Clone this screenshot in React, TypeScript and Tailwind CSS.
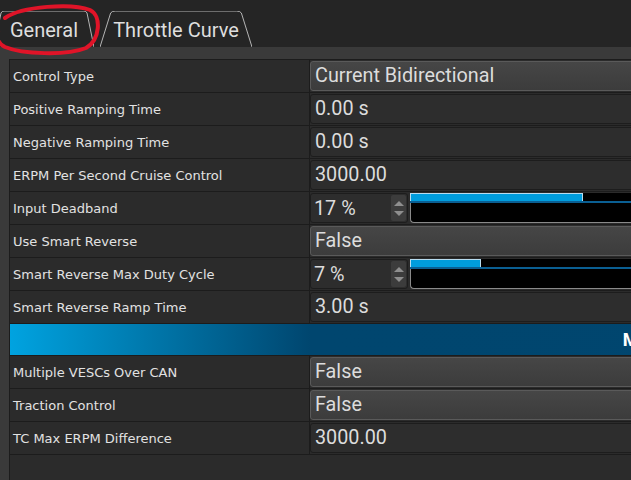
import React from 'react'

type Row =
  | { label: string; kind: 'combo' | 'text'; value: string }
  | { label: string; kind: 'spin'; value: string; pct: number }
  | { label: string; kind: 'banner'; value: string }

const rows: Row[] = [
  { label: 'Control Type', kind: 'combo', value: 'Current Bidirectional' },
  { label: 'Positive Ramping Time', kind: 'text', value: '0.00 s' },
  { label: 'Negative Ramping Time', kind: 'text', value: '0.00 s' },
  { label: 'ERPM Per Second Cruise Control', kind: 'text', value: '3000.00' },
  { label: 'Input Deadband', kind: 'spin', value: '17 %', pct: 17 },
  { label: 'Use Smart Reverse', kind: 'combo', value: 'False' },
  { label: 'Smart Reverse Max Duty Cycle', kind: 'spin', value: '7 %', pct: 7 },
  { label: 'Smart Reverse Ramp Time', kind: 'text', value: '3.00 s' },
  { label: '', kind: 'banner', value: 'Multiple ESCs over CAN' },
  { label: 'Multiple VESCs Over CAN', kind: 'combo', value: 'False' },
  { label: 'Traction Control', kind: 'combo', value: 'False' },
  { label: 'TC Max ERPM Difference', kind: 'text', value: '3000.00' },
]

const valueFont = "font-['Roboto',sans-serif] text-[19.8px] text-[#dcdcdc]"

function TabShape() {
  return (
    <svg className="absolute inset-0 h-full w-full" viewBox="0 0 100 36" preserveAspectRatio="none">
      <path d="M0 36 L7 2 Q8 0 10 0 L90 0 Q92 0 93 2 L100 36" fill="none" stroke="#b5b5b5" strokeWidth="1" vectorEffect="non-scaling-stroke" />
    </svg>
  )
}

function Tab({ label, width }: { label: string; width: string }) {
  return (
    <div className={`relative h-[36px] ${width} flex items-center justify-center pt-[2px]`}>
      <TabShape />
      <span className="relative font-['Roboto',sans-serif] text-[20px] text-[#dedede]">{label}</span>
    </div>
  )
}

function Spin({ value, pct }: { value: string; pct: number }) {
  return (
    <div className="flex h-full">
      <div className="flex w-[98px] rounded-[3px] border border-[#1d1d1d] bg-[#2d2d2d]">
        <div className={`flex-1 pl-[3px] leading-[30px] ${valueFont}`}>{value}</div>
        <div className="my-[1px] mr-[1px] flex w-[15px] flex-col items-center justify-center gap-[5px] rounded-[2px] bg-[#3c3c3c]">
          <div className="h-0 w-0 border-x-[5px] border-b-[5px] border-x-transparent border-b-[#8e8e8e]" />
          <div className="h-0 w-0 border-x-[5px] border-t-[5px] border-x-transparent border-t-[#8e8e8e]" />
        </div>
      </div>
      <div className="ml-[2px] flex flex-1 flex-col">
        <div className="h-[10px] border-b-2 border-[#0a5f93] bg-black">
          <div className="h-[8px] border-t border-l border-r border-[#b8dcef] bg-[#009ddd]" style={{ width: `${pct}%` }} />
        </div>
        <div className="flex-1 rounded-bl-[4px] border-l border-b border-[#8a8a8a] bg-black" />
      </div>
    </div>
  )
}

function Value({ row }: { row: Row }) {
  if (row.kind === 'combo') {
    return (
      <div className={`h-full rounded-[3px] border border-[#5a5a5a] bg-gradient-to-b from-[#464646] to-[#3c3c3c] pl-[4px] leading-[28px] ${valueFont}`}>
        {row.value}
      </div>
    )
  }
  if (row.kind === 'spin') return <Spin value={row.value} pct={row.pct} />
  return (
    <div className={`h-full rounded-[3px] border border-[#1d1d1d] bg-[#2d2d2d] pl-[4px] leading-[28px] ${valueFont}`}>
      {row.value}
    </div>
  )
}

export default function App() {
  return (
    <div className="relative h-[480px] w-[631px] overflow-hidden bg-[#3a3a3a]">
      <div className="flex h-[47px] items-end bg-[#252525]">
        <div className="-ml-[6px] flex gap-[6px]">
          <Tab label="General" width="w-[100px]" />
          <Tab label="Throttle Curve" width="w-[152px]" />
        </div>
      </div>

      <div className="ml-[9px] mt-[12px] w-[1420px] border-t border-l border-[#1c1c1c] bg-[#2b2b2b] pb-[40px]">
        {rows.map((row, i) =>
          row.kind === 'banner' ? (
            <div
              key={i}
              className="flex h-[32px] items-center justify-center border-b border-[#1c1c1c] bg-[linear-gradient(90deg,#00a3e0_0px,#00466f_300px,#00456e_100%)] pb-[1px] font-['Roboto',sans-serif] text-[18px] font-bold text-white"
            >
              {row.value}
            </div>
          ) : (
            <div key={i} className="flex h-[33px] border-b border-[#1c1c1c]">
              <div className="flex w-[300px] items-center border-r border-[#1c1c1c] pl-[3px] pt-[2px] font-['DejaVu_Sans',sans-serif] text-[13px] text-[#e2e2e2]">
                {row.label}
              </div>
              <div className="flex-1 pt-[1px] pb-[1px]">
                <Value row={row} />
              </div>
            </div>
          )
        )}
      </div>

      <svg className="pointer-events-none absolute left-0 top-0" width="110" height="60" viewBox="0 0 110 60">
        <path
          d="M5 18 C 22 6, 72 3, 90 10 C 102 16, 100 40, 86 48 C 66 56, 22 54, 5 47 C -3 43, -4 36, -2 32"
          fill="none"
          stroke="#e01428"
          strokeWidth="4"
          strokeLinecap="round"
        />
      </svg>
    </div>
  )
}
